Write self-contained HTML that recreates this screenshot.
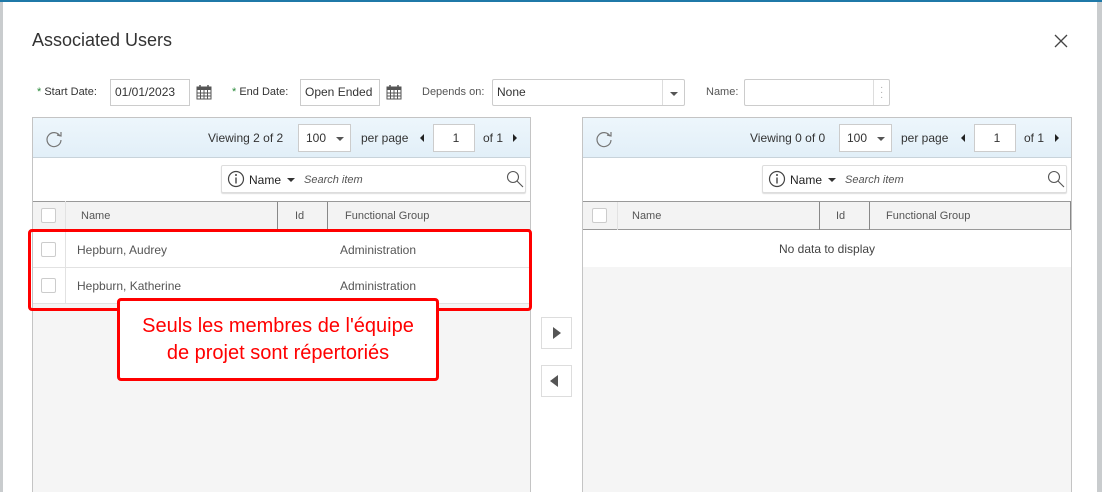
<!DOCTYPE html><html style="width:1102px;height:492px;overflow:hidden"><head><style>
*{box-sizing:border-box;margin:0;padding:0}
body{width:1102px;height:492px;overflow:hidden;background:#c9ccce;font-family:"Liberation Sans",sans-serif;position:relative;color:#444}
.a{position:absolute}
.m{position:absolute;left:3px;top:2px;width:1094px;height:490px;background:#fff}
.topbar{position:absolute;left:0;top:0;width:1102px;height:2px;background:#1f79a8}
.lbl{font-size:11px;color:#333}
.star{color:#2a8a3a}
.inp{border:1px solid #ccc;background:#fff;font-size:12px;color:#333;padding-left:4px;line-height:25px}
.panel{border:1px solid #c4c4c4;border-bottom:0;background:#f5f5f5}
.hd{background:linear-gradient(#edf6fc,#e2eff8);border-bottom:1px solid #c8d3da}
.t12{font-size:12px}
.cb{width:15px;height:15px;border:1px solid #ccc;border-radius:2px;background:#fff}
.cal{width:16px;height:16px}
</style></head><body>
<div class="topbar"></div>
<div class="m"></div>
<div class="a" style="left:32px;top:30px;font-size:18px;color:#333">Associated Users</div>
<svg class="a" style="left:1054px;top:34px" width="14" height="14"><path d="M1 1L13 13M13 1L1 13" stroke="#444" stroke-width="1.3"/></svg>

<div class="a lbl" style="left:37px;top:86px"><span class="star">*</span> Start Date:</div>
<div class="a inp" style="left:110px;top:79px;width:80px;height:27px">01/01/2023</div>
<svg class="a cal" style="left:196px;top:84px"><rect x="1" y="3" width="14" height="12" fill="none" stroke="#555"/><rect x="1" y="3" width="14" height="3" fill="#555"/><path d="M1 9H15M1 12H15M4.5 6V15M8 6V15M11.5 6V15" stroke="#555"/><path d="M4 1V4M12 1V4" stroke="#555" stroke-width="1.5"/></svg>
<div class="a lbl" style="left:232px;top:86px"><span class="star">*</span> End Date:</div>
<div class="a inp" style="left:300px;top:79px;width:80px;height:27px">Open Ended</div>
<svg class="a cal" style="left:386px;top:84px"><rect x="1" y="3" width="14" height="12" fill="none" stroke="#555"/><rect x="1" y="3" width="14" height="3" fill="#555"/><path d="M1 9H15M1 12H15M4.5 6V15M8 6V15M11.5 6V15" stroke="#555"/><path d="M4 1V4M12 1V4" stroke="#555" stroke-width="1.5"/></svg>
<div class="a lbl" style="left:422px;top:86px;color:#555">Depends on:</div>
<div class="a inp" style="left:492px;top:79px;width:193px;height:27px;border-radius:2px">None</div>
<div class="a" style="left:662px;top:80px;width:1px;height:25px;background:#ddd"></div>
<div class="a" style="left:670px;top:92px;border:4px solid transparent;border-top:4px solid #555;border-bottom:0"></div>
<div class="a lbl" style="left:706px;top:86px;color:#555">Name:</div>
<div class="a inp" style="left:744px;top:79px;width:146px;height:27px;border-radius:2px"></div>
<div class="a" style="left:873px;top:80px;width:1px;height:25px;background:#ddd"></div>
<div class="a" style="left:880px;top:85px;color:#aaa;font-size:10px;line-height:5px">·<br>·<br>·</div>

<div class="a panel" style="left:32px;top:117px;width:499px;height:375px"></div>
<div class="a hd" style="left:33px;top:118px;width:497px;height:40px"></div>
<div class="a" style="left:33px;top:158px;width:497px;height:43px;background:#fff"></div>
<div class="a" style="left:33px;top:201px;width:497px;height:29px;background:#f3f3f3;border-top:1px solid #999;border-bottom:1px solid #999"></div>
<div class="a" style="left:33px;top:230px;width:497px;height:74px;background:#fff"></div>
<div class="a" style="left:33px;top:267px;width:497px;height:1px;background:#e2e2e2"></div>
<div class="a" style="left:33px;top:303px;width:497px;height:1px;background:#e2e2e2"></div>
<div class="a" style="left:65px;top:201px;width:1px;height:103px;background:#e2e2e2"></div>
<div class="a" style="left:277px;top:202px;width:1px;height:28px;background:#888"></div>
<div class="a" style="left:327px;top:202px;width:1px;height:28px;background:#888"></div>
<svg class="a" style="left:44px;top:129px" width="20" height="20"><path d="M16 7A7 7 0 1 0 17 11" fill="none" stroke="#777" stroke-width="1.2"/><path d="M13 6L17 7L17 3" fill="none" stroke="#777" stroke-width="1.2"/></svg>
<div class="a t12" style="left:208px;top:131px;color:#333">Viewing 2 of 2</div>
<div class="a inp" style="left:298px;top:124px;width:53px;height:28px;line-height:26px;padding-left:7px">100</div>
<div class="a" style="left:336px;top:137px;border:4px solid transparent;border-top:4px solid #555;border-bottom:0"></div>
<div class="a t12" style="left:361px;top:131px;color:#333">per page</div>
<div class="a" style="left:420px;top:134px;border:4px solid transparent;border-right:4px solid #222;border-left:0"></div>
<div class="a inp" style="left:433px;top:124px;width:42px;height:28px;text-align:center;line-height:26px">1</div>
<div class="a t12" style="left:483px;top:131px;color:#333">of 1</div>
<div class="a" style="left:513px;top:134px;border:4px solid transparent;border-left:4px solid #222;border-right:0"></div>
<div class="a" style="left:221px;top:165px;width:305px;height:28px;border:1px solid #ddd;border-radius:2px;background:#fff;box-shadow:0 1px 1px #ddd"></div>
<svg class="a" style="left:227px;top:170px" width="18" height="18"><circle cx="9" cy="9" r="7.5" fill="none" stroke="#444" stroke-width="1.2"/><path d="M9 7.5V13.5" stroke="#444" stroke-width="1.4"/><circle cx="9" cy="5" r="1" fill="#444"/></svg>
<div class="a t12" style="left:249px;top:173px;color:#222">Name</div>
<div class="a" style="left:287px;top:178px;border:4px solid transparent;border-top:4px solid #333;border-bottom:0"></div>
<div class="a" style="left:304px;top:174px;font-size:11px;font-style:italic;color:#555">Search item</div>
<svg class="a" style="left:506px;top:170px" width="18" height="18"><circle cx="7" cy="7" r="5.5" fill="none" stroke="#555" stroke-width="1.1"/><path d="M11 11L17 17" stroke="#555" stroke-width="1.1"/></svg>
<div class="a cb" style="left:41px;top:208px"></div>
<div class="a" style="left:81px;top:210px;font-size:11px;color:#555">Name</div>
<div class="a" style="left:295px;top:210px;font-size:11px;color:#555">Id</div>
<div class="a" style="left:345px;top:210px;font-size:11px;color:#555">Functional Group</div>
<div class="a cb" style="left:41px;top:242px"></div>
<div class="a t12" style="left:77px;top:243px;color:#555">Hepburn, Audrey</div>
<div class="a t12" style="left:340px;top:243px;color:#555">Administration</div>
<div class="a cb" style="left:41px;top:278px"></div>
<div class="a t12" style="left:77px;top:279px;color:#555">Hepburn, Katherine</div>
<div class="a t12" style="left:340px;top:279px;color:#555">Administration</div>

<div class="a" style="left:541px;top:317px;width:31px;height:32px;border:1px solid #ddd;background:#fff"></div>
<div class="a" style="left:553px;top:327px;border:6px solid transparent;border-left:8px solid #555;border-right:0"></div>
<div class="a" style="left:541px;top:365px;width:31px;height:32px;border:1px solid #ddd;background:#fff"></div>
<div class="a" style="left:550px;top:375px;border:6px solid transparent;border-right:8px solid #555;border-left:0"></div>

<div class="a panel" style="left:582px;top:117px;width:490px;height:375px"></div>
<div class="a hd" style="left:583px;top:118px;width:488px;height:40px"></div>
<div class="a" style="left:583px;top:158px;width:488px;height:43px;background:#fff"></div>
<div class="a" style="left:583px;top:201px;width:488px;height:29px;background:#f3f3f3;border-top:1px solid #999;border-bottom:1px solid #999;border-right:1px solid #888"></div>
<div class="a" style="left:583px;top:230px;width:488px;height:37px;background:#fff"></div>
<div class="a" style="left:617px;top:202px;width:1px;height:28px;background:#e2e2e2"></div>
<div class="a" style="left:819px;top:202px;width:1px;height:28px;background:#888"></div>
<div class="a" style="left:869px;top:202px;width:1px;height:28px;background:#888"></div>
<svg class="a" style="left:594px;top:129px" width="20" height="20"><path d="M16 7A7 7 0 1 0 17 11" fill="none" stroke="#777" stroke-width="1.2"/><path d="M13 6L17 7L17 3" fill="none" stroke="#777" stroke-width="1.2"/></svg>
<div class="a t12" style="left:750px;top:131px;color:#333">Viewing 0 of 0</div>
<div class="a inp" style="left:839px;top:124px;width:53px;height:28px;line-height:26px;padding-left:7px">100</div>
<div class="a" style="left:877px;top:137px;border:4px solid transparent;border-top:4px solid #555;border-bottom:0"></div>
<div class="a t12" style="left:901px;top:131px;color:#333">per page</div>
<div class="a" style="left:961px;top:134px;border:4px solid transparent;border-right:4px solid #222;border-left:0"></div>
<div class="a inp" style="left:974px;top:124px;width:42px;height:28px;text-align:center;line-height:26px">1</div>
<div class="a t12" style="left:1024px;top:131px;color:#333">of 1</div>
<div class="a" style="left:1055px;top:134px;border:4px solid transparent;border-left:4px solid #222;border-right:0"></div>
<div class="a" style="left:762px;top:165px;width:305px;height:28px;border:1px solid #ddd;border-radius:2px;background:#fff;box-shadow:0 1px 1px #ddd"></div>
<svg class="a" style="left:768px;top:170px" width="18" height="18"><circle cx="9" cy="9" r="7.5" fill="none" stroke="#444" stroke-width="1.2"/><path d="M9 7.5V13.5" stroke="#444" stroke-width="1.4"/><circle cx="9" cy="5" r="1" fill="#444"/></svg>
<div class="a t12" style="left:790px;top:173px;color:#222">Name</div>
<div class="a" style="left:828px;top:178px;border:4px solid transparent;border-top:4px solid #333;border-bottom:0"></div>
<div class="a" style="left:845px;top:174px;font-size:11px;font-style:italic;color:#555">Search item</div>
<svg class="a" style="left:1047px;top:170px" width="18" height="18"><circle cx="7" cy="7" r="5.5" fill="none" stroke="#555" stroke-width="1.1"/><path d="M11 11L17 17" stroke="#555" stroke-width="1.1"/></svg>
<div class="a cb" style="left:592px;top:208px"></div>
<div class="a" style="left:632px;top:210px;font-size:11px;color:#555">Name</div>
<div class="a" style="left:836px;top:210px;font-size:11px;color:#555">Id</div>
<div class="a" style="left:886px;top:210px;font-size:11px;color:#555">Functional Group</div>
<div class="a t12" style="left:583px;top:242px;width:488px;text-align:center;color:#444">No data to display</div>

<div class="a" style="left:28px;top:229px;width:504px;height:82px;border:3px solid #f00;border-radius:4px"></div>
<div class="a" style="left:117px;top:298px;width:322px;height:83px;border:3px solid #f00;border-radius:4px;background:#fff;color:#f00;font-size:20px;text-align:center;line-height:27px;padding-top:12px">Seuls les membres de l'équipe<br>de projet sont répertoriés</div>
</body></html>
